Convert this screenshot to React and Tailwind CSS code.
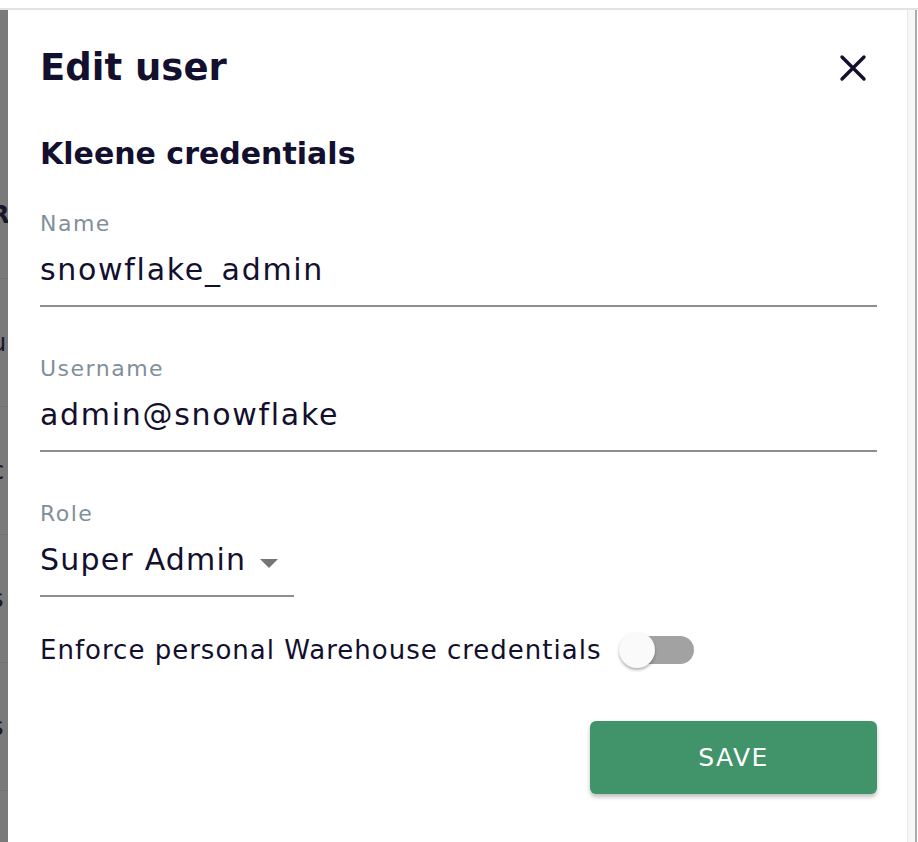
import React, { useState } from 'react';

const FONT = { fontFamily: '"DejaVu Sans", "Open Sans", sans-serif' };

// bits of the table that sits behind the drawer (dimmed by the backdrop)
const backRows = ['R', 'u', 'c', 's', 's'];

function CloseIcon() {
    return (
        <svg className="w-7 h-7" viewBox="0 0 28 28" fill="none" stroke="#130f2e" strokeWidth={3.4} strokeLinecap="round">
            <path d="M3 3L25 25M25 3L3 25" />
        </svg>
    );
}

function Field({ label, value }) {
    return (
        <div className="flex flex-col w-full">
            <span className="text-[22px] leading-[30px] tracking-[1.5px] text-[#80909b]">{label}</span>
            <span className="mt-[11px] text-[30px] leading-[40px] tracking-[1.7px] text-[#130f2e] pb-[15px] border-b-2 border-[#8e8e8e]">
                {value}
            </span>
        </div>
    );
}

export default function App() {
    const [enforce, setEnforce] = useState(false);

    return (
        <div className="w-[918px] h-[842px] bg-white flex flex-col overflow-hidden" style={FONT}>
            <div className="h-2 bg-white" />
            <div className="h-[2px] bg-[#e2e2e2]" />

            <div className="flex flex-1 min-h-0">
                {/* Backdrop strip */}
                <div className="w-2 bg-[#7a7a7a] overflow-hidden flex flex-col">
                    <div className="h-[141px] shrink-0" />
                    {backRows.map((ch, i) => (
                        <div key={i} className="h-[128px] shrink-0 flex items-center border-b border-[#707070]">
                            <span className={`-ml-[9px] text-[24px] text-[#17172a] ${i === 0 ? 'font-bold' : ''}`}>{ch}</span>
                        </div>
                    ))}
                </div>

                {/* Drawer */}
                <div className="flex-1 bg-white pl-8 pr-[30px] pt-[34px] flex flex-col">
                    <div className="flex items-center justify-between">
                        <h1 className="text-[37px] leading-[48px] font-bold text-[#130f2e]">Edit user</h1>
                        <button className="mr-[10px]" aria-label="close">
                            <CloseIcon />
                        </button>
                    </div>

                    <h2 className="mt-[42px] text-[30px] leading-[40px] font-bold text-[#130f2e]">Kleene credentials</h2>

                    <div className="mt-[35px]">
                        <Field label="Name" value="snowflake_admin" />
                    </div>
                    <div className="mt-[47px]">
                        <Field label="Username" value="admin@snowflake" />
                    </div>
                    <div className="mt-[47px] flex flex-col w-[254px]">
                        <span className="text-[22px] leading-[30px] tracking-[1.5px] text-[#80909b]">Role</span>
                        <div className="mt-[11px] flex items-center pb-[15px] border-b-2 border-[#8e8e8e]">
                            <span className="text-[30px] leading-[40px] tracking-[1.2px] text-[#130f2e]">Super Admin</span>
                            <svg className="ml-[14px] w-[18px] h-[9px] mt-[6px]" viewBox="0 0 18 9">
                                <path d="M0 0h18L9 9z" fill="#757575" />
                            </svg>
                        </div>
                    </div>

                    <div className="mt-[33px] flex items-center">
                        <span className="text-[26px] leading-[40px] tracking-[1px] text-[#130f2e]">Enforce personal Warehouse credentials</span>
                        <button
                            onClick={() => setEnforce(!enforce)}
                            className="relative ml-[18px] w-[76px] h-[40px]"
                            aria-label="toggle"
                        >
                            <span className={`absolute left-[5px] top-[6px] w-[70px] h-[28px] rounded-full ${enforce ? 'bg-[#8fc4a8]' : 'bg-[#a2a2a2]'}`} />
                            <span
                                className={`absolute top-[2px] w-[36px] h-[36px] rounded-full shadow-[0_2px_3px_rgba(0,0,0,0.3)] ${enforce ? 'left-[40px] bg-[#41936a]' : 'left-0 bg-[#fafafa]'}`}
                            />
                        </button>
                    </div>

                    <div className="mt-[51px] flex justify-end">
                        <button className="w-[287px] h-[73px] rounded-md bg-[#41936a] text-white text-[25px] font-medium tracking-[1.5px] shadow-[0_3px_4px_rgba(0,0,0,0.25)]">
                            SAVE
                        </button>
                    </div>
                </div>

                {/* Right edge / scroll gutter */}
                <div className="w-px bg-[#e6e6e6]" />
                <div className="w-[7px] bg-[#f7f7f7]" />
                <div className="w-[2px] bg-[#ababab]" />
                <div className="w-px bg-white" />
            </div>
        </div>
    );
}
